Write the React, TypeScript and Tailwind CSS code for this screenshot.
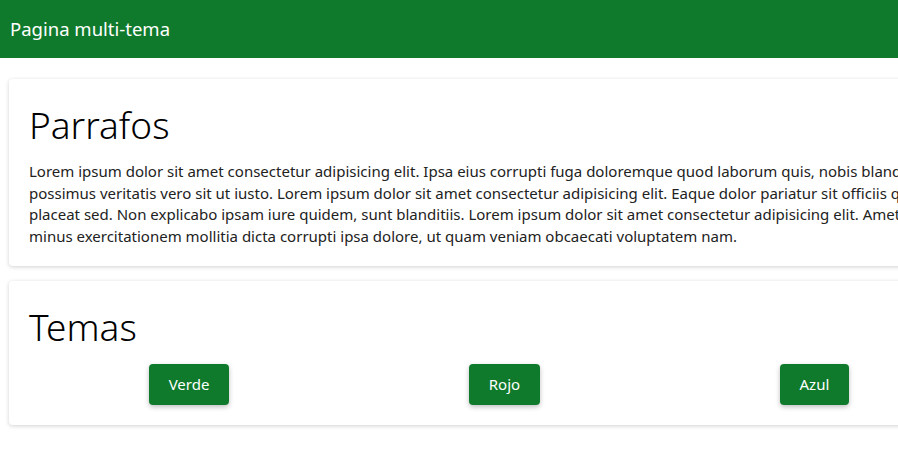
import React from 'react';

const font = { fontFamily: '"Noto Sans", "Open Sans", sans-serif' };

const lines = [
  'Lorem ipsum dolor sit amet consectetur adipisicing elit. Ipsa eius corrupti fuga doloremque quod laborum quis, nobis blanditiis cumque',
  'possimus veritatis vero sit ut iusto. Lorem ipsum dolor sit amet consectetur adipisicing elit. Eaque dolor pariatur sit officiis quas',
  'placeat sed. Non explicabo ipsam iure quidem, sunt blanditiis. Lorem ipsum dolor sit amet consectetur adipisicing elit. Amet quae',
  'minus exercitationem mollitia dicta corrupti ipsa dolore, ut quam veniam obcaecati voluptatem nam.',
];

const temas = ['Verde', 'Rojo', 'Azul'];

export default function App() {
  return (
    <div className="w-screen min-h-screen overflow-hidden bg-white text-black" style={font}>
      {/* Barra superior */}
      <header className="h-[58px] bg-[#107a2c] flex items-center px-[10px]">
        <span className="text-[18.5px] text-white">Pagina multi-tema</span>
      </header>

      <main className="w-[980px] ml-[9px] pt-[21px] flex flex-col gap-[15px]">
        <section className="rounded bg-white pt-[22px] px-5 pb-[19px] shadow-[0_1px_4px_rgba(0,0,0,0.18)]">
          <h1 className="text-[37px] leading-[48px] font-light mb-[12px]">Parrafos</h1>
          <p className="text-[15px] leading-[21.5px] text-[#222]">
            {lines.map((l) => (
              <span key={l} className="block whitespace-nowrap">
                {l}
              </span>
            ))}
          </p>
        </section>

        <section className="rounded bg-white pt-[22px] px-5 pb-5 shadow-[0_1px_4px_rgba(0,0,0,0.18)]">
          <h1 className="text-[37px] leading-[48px] font-light mb-[13px]">Temas</h1>
          <div className="flex justify-around">
            {temas.map((t) => (
              <button
                key={t}
                className="h-[41px] px-5 rounded bg-[#107a2c] text-white text-[15px] font-normal shadow-[0_2px_5px_rgba(0,0,0,0.25)]"
              >
                {t}
              </button>
            ))}
          </div>
        </section>
      </main>
    </div>
  );
}
